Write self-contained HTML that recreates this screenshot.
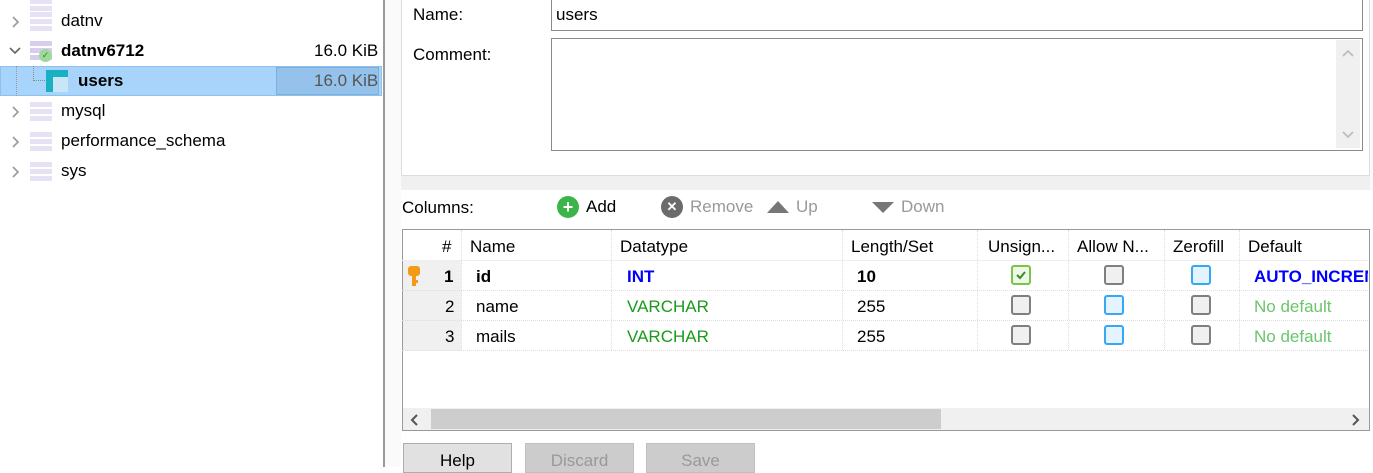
<!DOCTYPE html>
<html><head><meta charset="utf-8"><style>
*{margin:0;padding:0;box-sizing:border-box}
body{width:1373px;height:467px;overflow:hidden;background:#fff;font-family:"Liberation Sans",sans-serif;font-size:17px;color:#000;position:relative}
.a{position:absolute;white-space:nowrap}
.dbi{position:absolute;width:22px;height:20px}
.dbi i{position:absolute;left:0;width:22px;height:5px;background:#e6e1f3}
.chev{position:absolute}
.cb{position:absolute;width:20px;height:20px;border:2.5px solid #7f7f7f;border-radius:3px;background:#f0f0f0}
.cb.b{border-color:#35a7f5;background:#e3f3ff}
.cb.g{border-color:#7cc34a;background:#eef8e6}
.vl{position:absolute;top:230px;height:120px;border-left:1px dotted #ddd}
.hl{position:absolute;left:402px;width:966px;border-top:1px dotted #ddd}
.btn{position:absolute;top:443px;width:109px;height:30px;border:1px solid #adadad;background:#e1e1e1;text-align:center;padding-top:7px;font-size:17px}
</style></head><body>
<svg width="0" height="0" style="position:absolute"><defs>
<symbol id="cr" viewBox="0 0 10 12"><path d="M2 1 L7 6 L2 11" fill="none" stroke="#999" stroke-width="1.6"/></symbol>
<symbol id="cd" viewBox="0 0 12 10"><path d="M1 2 L6 7 L11 2" fill="none" stroke="#666" stroke-width="1.6"/></symbol>
</defs></svg>
<!-- left tree -->
<div class="dbi" style="left:30px;top:-8px"><i style="top:0"></i><i style="top:7px"></i><i style="top:14px"></i></div>
<svg class="chev" style="left:11px;top:16px" width="10" height="12"><use href="#cr"/></svg>
<div class="dbi" style="left:30px;top:12px"><i style="top:0"></i><i style="top:7px"></i><i style="top:14px"></i></div>
<div class="a" style="left:61px;top:11px">datnv</div>
<svg class="chev" style="left:9px;top:46px" width="12" height="10"><use href="#cd"/></svg>
<div class="dbi" style="left:30px;top:41px"><i style="top:0;background:#d8cdef"></i><i style="top:7px;background:#d8cdef"></i><i style="top:14px;background:#d8cdef"></i></div>
<div class="a" style="left:39px;top:49px;width:13px;height:13px;border-radius:50%;background:#9ed89a;color:#2a8a2a;font-size:9px;text-align:center;line-height:13px">&#10003;</div>
<div class="a" style="left:61px;top:41px;font-weight:bold">datnv6712</div>
<div class="a" style="left:314px;top:41px">16.0 KiB</div>
<div class="a" style="left:0;top:66px;width:382px;height:30px;background:#a8d4fb;border:1px solid #8cc2f0"></div>
<div class="a" style="left:16px;top:66px;height:30px;border-left:1px dotted #999"></div>
<div class="a" style="left:33px;top:66px;height:15px;width:12px;border-left:1px dotted #888;border-bottom:1px dotted #888"></div>
<div class="a" style="left:46px;top:70px;width:22px;height:22px;background:#c8e6f5"><div class="a" style="left:0;top:0;width:22px;height:7px;background:#19b0c3"></div><div class="a" style="left:0;top:0;width:7px;height:22px;background:#19b0c3"></div></div>
<div class="a" style="left:78px;top:71px;font-weight:bold">users</div>
<div class="a" style="left:276px;top:67px;width:103px;height:28px;background:#95c2ea;border:1px solid #7eafdb"></div>
<div class="a" style="left:314px;top:71px;color:#555">16.0 KiB</div>
<svg class="chev" style="left:11px;top:106px" width="10" height="12"><use href="#cr"/></svg>
<div class="dbi" style="left:30px;top:102px"><i style="top:0"></i><i style="top:7px"></i><i style="top:14px"></i></div>
<div class="a" style="left:61px;top:101px">mysql</div>
<svg class="chev" style="left:11px;top:136px" width="10" height="12"><use href="#cr"/></svg>
<div class="dbi" style="left:30px;top:132px"><i style="top:0"></i><i style="top:7px"></i><i style="top:14px"></i></div>
<div class="a" style="left:61px;top:131px">performance_schema</div>
<svg class="chev" style="left:11px;top:166px" width="10" height="12"><use href="#cr"/></svg>
<div class="dbi" style="left:30px;top:162px"><i style="top:0"></i><i style="top:7px"></i><i style="top:14px"></i></div>
<div class="a" style="left:61px;top:161px">sys</div>
<!-- splitter -->
<div class="a" style="left:383px;top:0;width:2px;height:467px;background:#9a9a9a"></div>
<div class="a" style="left:385px;top:0;width:988px;height:467px;background:#fafafa"></div>
<div class="a" style="left:401px;top:-2px;width:969px;height:178px;background:#fff;border:1px solid #ddd"></div>
<div class="a" style="left:401px;top:176px;width:969px;height:14px;background:#f0f0f0"></div>
<div class="a" style="left:401px;top:190px;width:972px;height:277px;background:#fff"></div>
<div class="a" style="left:413px;top:5px">Name:</div>
<div class="a" style="left:551px;top:-2px;width:812px;height:33px;border:1px solid #8a8a8a;background:#fff"></div>
<div class="a" style="left:556px;top:5px">users</div>
<div class="a" style="left:413px;top:45px">Comment:</div>
<div class="a" style="left:551px;top:38px;width:812px;height:113px;border:1px solid #8a8a8a;background:#fff"></div>
<div class="a" style="left:1336px;top:40px;width:24px;height:108px;background:#f0f0f0"></div>
<svg class="a" style="left:1342px;top:49px" width="12" height="8"><path d="M1 7 L6 2 L11 7" fill="none" stroke="#bbb" stroke-width="1.6"/></svg>
<svg class="a" style="left:1342px;top:131px" width="12" height="8"><path d="M1 1 L6 6 L11 1" fill="none" stroke="#bbb" stroke-width="1.6"/></svg>
<!-- toolbar -->
<div class="a" style="left:402px;top:198px">Columns:</div>
<div class="a" style="left:557px;top:196px;width:22px;height:22px;border-radius:50%;background:#3bb54a;color:#fff;font-weight:bold;text-align:center;line-height:22px;font-size:18px">+</div>
<div class="a" style="left:586px;top:197px">Add</div>
<div class="a" style="left:661px;top:196px;width:22px;height:22px;border-radius:50%;background:#6b6b6b;color:#fff;font-weight:bold;text-align:center;line-height:22px;font-size:13px">&#x2715;</div>
<div class="a" style="left:690px;top:197px;color:#999">Remove</div>
<svg class="a" style="left:766px;top:200px" width="24" height="14"><path d="M1 13 L12 1 L23 13Z" fill="#777"/></svg>
<div class="a" style="left:796px;top:197px;color:#999">Up</div>
<svg class="a" style="left:871px;top:201px" width="24" height="13"><path d="M1 1 L23 1 L12 12Z" fill="#777"/></svg>
<div class="a" style="left:901px;top:197px;color:#999">Down</div>
<!-- grid -->
<div class="a" style="left:402px;top:229px;width:968px;height:202px;border:1px solid #999;background:#fff"></div>
<div class="a" style="left:403px;top:261px;width:58px;height:90px;background:#f0f0f0"></div>
<div class="hl" style="top:260px;border-top:1px solid #eee"></div>
<div class="hl" style="top:290px"></div><div class="hl" style="top:320px"></div><div class="hl" style="top:350px"></div>
<div class="vl" style="left:461px"></div><div class="vl" style="left:611px"></div><div class="vl" style="left:842px"></div><div class="vl" style="left:977px"></div><div class="vl" style="left:1068px"></div><div class="vl" style="left:1164px"></div><div class="vl" style="left:1239px"></div>
<div class="a" style="left:442px;top:237px">#</div>
<div class="a" style="left:470px;top:237px">Name</div>
<div class="a" style="left:620px;top:237px">Datatype</div>
<div class="a" style="left:851px;top:237px">Length/Set</div>
<div class="a" style="left:988px;top:237px">Unsign...</div>
<div class="a" style="left:1077px;top:237px">Allow N...</div>
<div class="a" style="left:1173px;top:237px">Zerofill</div>
<div class="a" style="left:1248px;top:237px">Default</div>
<svg class="a" style="left:407px;top:265px" width="14" height="24"><rect x="1" y="1" width="12" height="10" rx="3" fill="#f59a16"/><rect x="5" y="9" width="4" height="12" fill="#f59a16"/><rect x="5" y="15" width="6" height="3" fill="#f59a16"/></svg>
<div class="a" style="left:444px;top:267px;font-weight:bold">1</div>
<div class="a" style="left:476px;top:267px;font-weight:bold">id</div>
<div class="a" style="left:627px;top:267px;font-weight:bold;color:#0000ff">INT</div>
<div class="a" style="left:857px;top:267px;font-weight:bold">10</div>
<div class="cb g" style="left:1011px;top:265px"><svg style="position:absolute;left:2px;top:2px" width="12" height="12"><path d="M2 6 L5 9 L10 3" fill="none" stroke="#3a8a2a" stroke-width="2"/></svg></div>
<div class="cb" style="left:1104px;top:265px"></div>
<div class="cb b" style="left:1191px;top:265px"></div>
<div class="a" style="left:1254px;top:267px;font-weight:bold;color:#0000ff;width:114px;overflow:hidden">AUTO_INCREMENT</div>
<div class="a" style="left:445px;top:297px">2</div>
<div class="a" style="left:476px;top:297px">name</div>
<div class="a" style="left:627px;top:297px;color:#1a9a1a">VARCHAR</div>
<div class="a" style="left:857px;top:297px">255</div>
<div class="cb" style="left:1011px;top:295px"></div>
<div class="cb b" style="left:1104px;top:295px"></div>
<div class="cb" style="left:1191px;top:295px"></div>
<div class="a" style="left:1254px;top:297px;color:#6cc46c">No default</div>
<div class="a" style="left:445px;top:327px">3</div>
<div class="a" style="left:476px;top:327px">mails</div>
<div class="a" style="left:627px;top:327px;color:#1a9a1a">VARCHAR</div>
<div class="a" style="left:857px;top:327px">255</div>
<div class="cb" style="left:1011px;top:325px"></div>
<div class="cb b" style="left:1104px;top:325px"></div>
<div class="cb" style="left:1191px;top:325px"></div>
<div class="a" style="left:1254px;top:327px;color:#6cc46c">No default</div>
<!-- scrollbar -->
<div class="a" style="left:403px;top:408px;width:966px;height:22px;background:#f0f0f0"></div>
<div class="a" style="left:431px;top:409px;width:510px;height:20px;background:#cdcdcd"></div>
<svg class="a" style="left:410px;top:414px" width="10" height="12"><path d="M7 1 L2 6 L7 11" fill="none" stroke="#555" stroke-width="2"/></svg>
<svg class="a" style="left:1351px;top:414px" width="10" height="12"><path d="M2 1 L7 6 L2 11" fill="none" stroke="#555" stroke-width="2"/></svg>
<!-- buttons -->
<div class="btn" style="left:403px">Help</div>
<div class="btn" style="left:525px;background:#cccccc;border-color:#bfbfbf;color:#999">Discard</div>
<div class="btn" style="left:646px;background:#cccccc;border-color:#bfbfbf;color:#999">Save</div>
</body></html>
